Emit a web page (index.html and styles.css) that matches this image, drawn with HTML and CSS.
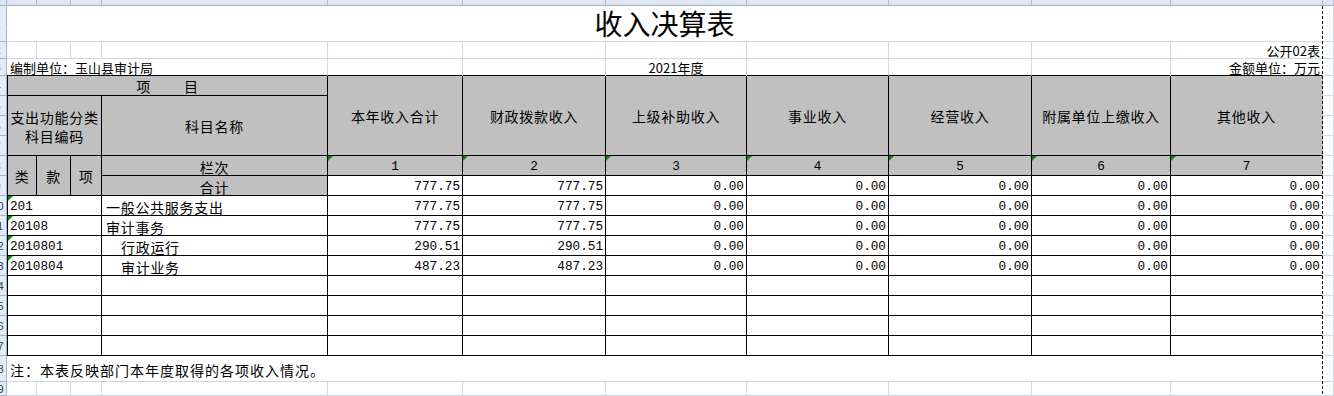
FILE: index.html
```html
<!DOCTYPE html>
<html lang="zh-CN">
<head>
<meta charset="utf-8">
<title>收入决算表</title>
<link rel="stylesheet" href="styles.css">
</head>
<body>
<div class="sheet">
  <!-- column headers -->
  <div class="corner"></div>
  <div class="ch"><span>A</span></div>
  <div class="ch"><span>B</span></div>
  <div class="ch"><span>C</span></div>
  <div class="ch"><span>D</span></div>
  <div class="ch"><span>E</span></div>
  <div class="ch"><span>F</span></div>
  <div class="ch"><span>G</span></div>
  <div class="ch"><span>H</span></div>
  <div class="ch"><span>I</span></div>
  <div class="ch"><span>J</span></div>
  <div class="ch"><span>K</span></div>
  <div class="ch"><span>L</span></div>

  <!-- row 1 -->
  <div class="rn"><span>1</span></div>
  <div class="cell g s11 kr title">收入决算表</div>
  <div class="cell g"></div>

  <!-- row 2 -->
  <div class="rn"><span>2</span></div>
  <div class="cell g"></div>
  <div class="cell g"></div>
  <div class="cell g"></div>
  <div class="cell g"></div>
  <div class="cell g"></div>
  <div class="cell g"></div>
  <div class="cell g"></div>
  <div class="cell g"></div>
  <div class="cell g"></div>
  <div class="cell g"></div>
  <div class="cell g kr right sm">公开02表</div>
  <div class="cell g"></div>

  <!-- row 3 -->
  <div class="rn"><span>3</span></div>
  <div class="cell g bb s4 sm lead">编制单位：玉山县审计局</div>
  <div class="cell g bb"></div>
  <div class="cell g bb"></div>
  <div class="cell g bb ctr sm">2021年度</div>
  <div class="cell g bb"></div>
  <div class="cell g bb"></div>
  <div class="cell g bb"></div>
  <div class="cell g bb kr right sm">金额单位：万元</div>
  <div class="cell g"></div>

  <!-- row 4 -->
  <div class="rn"><span>4</span></div>
  <div class="cell t hd ea s4 ctr">项<i class="gap"></i>目</div>
  <div class="cell t hd r4 ctr">本年收入合计</div>
  <div class="cell t hd r4 ctr">财政拨款收入</div>
  <div class="cell t hd r4 ctr">上级补助收入</div>
  <div class="cell t hd r4 ctr">事业收入</div>
  <div class="cell t hd r4 ctr">经营收入</div>
  <div class="cell t hd r4 ctr">附属单位上缴收入</div>
  <div class="cell t hd r4 ctr kr">其他收入</div>
  <div class="cell g"></div>

  <!-- row 5 -->
  <div class="rn"><span>5</span></div>
  <div class="cell t hd ea s3 r3 ctr wrap">支出功能分类<br>科目编码</div>
  <div class="cell t hd r3 ctr">科目名称</div>
  <div class="cell g"></div>

  <!-- row 6 -->
  <div class="rn"><span>6</span></div>
  <div class="cell g"></div>

  <!-- row 7 -->
  <div class="rn"><span>7</span></div>
  <div class="cell g"></div>

  <!-- row 8 -->
  <div class="rn"><span>8</span></div>
  <div class="cell t hd ea r2 ctr">类</div>
  <div class="cell t hd r2 ctr">款</div>
  <div class="cell t hd r2 ctr">项</div>
  <div class="cell t hd ctr low">栏次</div>
  <div class="cell t hd ctr mono low tri">1</div>
  <div class="cell t hd ctr mono low tri">2</div>
  <div class="cell t hd ctr mono low tri">3</div>
  <div class="cell t hd ctr mono low tri">4</div>
  <div class="cell t hd ctr mono low tri">5</div>
  <div class="cell t hd ctr mono low tri">6</div>
  <div class="cell t hd ctr mono low tri kr">7</div>
  <div class="cell g"></div>

  <!-- row 9 -->
  <div class="rn"><span>9</span></div>
  <div class="cell t hd ctr low">合计</div>
  <div class="cell t num">777.75</div>
  <div class="cell t num">777.75</div>
  <div class="cell t num">0.00</div>
  <div class="cell t num">0.00</div>
  <div class="cell t num">0.00</div>
  <div class="cell t num">0.00</div>
  <div class="cell t num kr">0.00</div>
  <div class="cell g"></div>

  <!-- row 10 -->
  <div class="rn"><span>10</span></div>
  <div class="cell t ea s3 code tri">201</div>
  <div class="cell t name">一般公共服务支出</div>
  <div class="cell t num">777.75</div>
  <div class="cell t num">777.75</div>
  <div class="cell t num">0.00</div>
  <div class="cell t num">0.00</div>
  <div class="cell t num">0.00</div>
  <div class="cell t num">0.00</div>
  <div class="cell t num kr">0.00</div>
  <div class="cell g"></div>

  <!-- row 11 -->
  <div class="rn"><span>11</span></div>
  <div class="cell t ea s3 code tri">20108</div>
  <div class="cell t name">审计事务</div>
  <div class="cell t num">777.75</div>
  <div class="cell t num">777.75</div>
  <div class="cell t num">0.00</div>
  <div class="cell t num">0.00</div>
  <div class="cell t num">0.00</div>
  <div class="cell t num">0.00</div>
  <div class="cell t num kr">0.00</div>
  <div class="cell g"></div>

  <!-- row 12 -->
  <div class="rn"><span>12</span></div>
  <div class="cell t ea s3 code tri">2010801</div>
  <div class="cell t name indent">行政运行</div>
  <div class="cell t num">290.51</div>
  <div class="cell t num">290.51</div>
  <div class="cell t num">0.00</div>
  <div class="cell t num">0.00</div>
  <div class="cell t num">0.00</div>
  <div class="cell t num">0.00</div>
  <div class="cell t num kr">0.00</div>
  <div class="cell g"></div>

  <!-- row 13 -->
  <div class="rn"><span>13</span></div>
  <div class="cell t ea s3 code tri">2010804</div>
  <div class="cell t name indent">审计业务</div>
  <div class="cell t num">487.23</div>
  <div class="cell t num">487.23</div>
  <div class="cell t num">0.00</div>
  <div class="cell t num">0.00</div>
  <div class="cell t num">0.00</div>
  <div class="cell t num">0.00</div>
  <div class="cell t num kr">0.00</div>
  <div class="cell g"></div>

  <!-- rows 14-17 (empty) -->
  <div class="rn"><span>14</span></div>
  <div class="cell t ea s3"></div>
  <div class="cell t"></div>
  <div class="cell t"></div><div class="cell t"></div><div class="cell t"></div><div class="cell t"></div><div class="cell t"></div><div class="cell t"></div><div class="cell t kr"></div>
  <div class="cell g"></div>

  <div class="rn"><span>15</span></div>
  <div class="cell t ea s3"></div>
  <div class="cell t"></div>
  <div class="cell t"></div><div class="cell t"></div><div class="cell t"></div><div class="cell t"></div><div class="cell t"></div><div class="cell t"></div><div class="cell t kr"></div>
  <div class="cell g"></div>

  <div class="rn"><span>16</span></div>
  <div class="cell t ea s3"></div>
  <div class="cell t"></div>
  <div class="cell t"></div><div class="cell t"></div><div class="cell t"></div><div class="cell t"></div><div class="cell t"></div><div class="cell t"></div><div class="cell t kr"></div>
  <div class="cell g"></div>

  <div class="rn"><span>17</span></div>
  <div class="cell t ea s3"></div>
  <div class="cell t"></div>
  <div class="cell t"></div><div class="cell t"></div><div class="cell t"></div><div class="cell t"></div><div class="cell t"></div><div class="cell t"></div><div class="cell t kr"></div>
  <div class="cell g"></div>

  <!-- row 18 note -->
  <div class="rn"><span>18</span></div>
  <div class="cell g s11 kr note">注：本表反映部门本年度取得的各项收入情况。</div>
  <div class="cell g"></div>

  <!-- row 19 -->
  <div class="rn"><span>19</span></div>
  <div class="cell g"></div>
  <div class="cell g"></div>
  <div class="cell g"></div>
  <div class="cell g"></div>
  <div class="cell g"></div>
  <div class="cell g"></div>
  <div class="cell g"></div>
  <div class="cell g"></div>
  <div class="cell g"></div>
  <div class="cell g"></div>
  <div class="cell g kr"></div>
  <div class="cell g"></div>

  <div class="pagebreak"></div>
</div>
</body>
</html>
```

FILE: styles.css
```css
html, body {
  margin: 0;
  padding: 0;
  background: #ffffff;
}

body {
  width: 1334px;
  height: 396px;
  overflow: hidden;
  font-family: "Noto Sans CJK SC", "Noto Sans", sans-serif;
  color: #000;
}

.sheet {
  position: relative;
  display: grid;
  width: 1334px;
  height: 396px;
  grid-template-columns: 7px 30px 34px 31px 226px 135px 143px 141px 142px 143px 139px 152px 1fr;
  grid-template-rows: 6px 36px 17px 17px repeat(14, 20px) 26px 1fr;
}

/* sheet chrome */
.corner {
  box-sizing: border-box;
  background: #dfe6f0;
  border-right: 1px solid #9eb6ce;
  border-bottom: 1px solid #9eb6ce;
}

.ch {
  box-sizing: border-box;
  display: flex;
  justify-content: center;
  overflow: hidden;
  background: linear-gradient(#e3eaf4, #d7e0ec);
  border-right: 1px solid #a9bdd5;
  border-bottom: 1px solid #9eb6ce;
}

.ch span {
  display: block;
  flex: none;
  margin-top: -12px;
  font-family: "Liberation Sans", sans-serif;
  font-size: 12px;
  line-height: 16px;
  color: #27415f;
}

.rn {
  box-sizing: border-box;
  display: flex;
  align-items: center;
  overflow: hidden;
  background: #e4ecf7;
  border-right: 1px solid #9eb6ce;
  border-bottom: 1px solid #9eb6ce;
}

.rn span {
  display: block;
  flex: none;
  width: 19px;
  margin-left: -12px;
  text-align: center;
  font-family: "Liberation Sans", sans-serif;
  font-size: 11px;
  color: #27415f;
}

/* cells */
.cell {
  box-sizing: border-box;
  position: relative;
  display: flex;
  align-items: center;
  min-width: 0;
  overflow: hidden;
  font-size: 14px;
  letter-spacing: 0.7px;
  line-height: 16px;
  white-space: nowrap;
}

.g {
  border-right: 1px solid #d0d7e5;
  border-bottom: 1px solid #d0d7e5;
}

.t {
  border-right: 1px solid #000;
  border-bottom: 1px solid #000;
}

.ea {
  border-left: 1px solid #000;
}

.bb {
  border-bottom-color: #000;
}

.kr {
  border-right-color: transparent;
}

.hd {
  background: #c0c0c0;
}

/* spans */
.s3 { grid-column: span 3; }
.s4 { grid-column: span 4; }
.s11 { grid-column: span 11; }
.r2 { grid-row: span 2; }
.r3 { grid-row: span 3; }
.r4 { grid-row: span 4; }

/* text */
.ctr {
  justify-content: center;
  text-align: center;
}

.right {
  justify-content: flex-end;
  padding-right: 2px;
}

.low {
  padding-top: 2px;
}

.wrap {
  white-space: normal;
  line-height: 19px;
  padding-top: 2px;
}

.gap {
  display: inline-block;
  width: 33px;
}

.title {
  justify-content: center;
  align-items: flex-end;
  font-size: 28px;
  letter-spacing: 0;
  line-height: 34px;
  padding-bottom: 1px;
}

.sm {
  font-size: 13px;
  letter-spacing: 0;
  padding-top: 1px;
}

.lead {
  padding-left: 3px;
}

.mono {
  font-family: "Liberation Mono", monospace;
  font-size: 12.7px;
  letter-spacing: 0;
}

.num {
  justify-content: flex-end;
  padding-right: 2px;
  padding-top: 2px;
  font-family: "Liberation Mono", monospace;
  font-size: 12.7px;
  letter-spacing: 0;
}

.code {
  padding-left: 2px;
  padding-top: 2px;
  font-family: "Liberation Mono", monospace;
  font-size: 12.7px;
  letter-spacing: 0;
}

.name {
  padding-left: 4px;
  padding-top: 2px;
}

.name.indent {
  padding-left: 19px;
}

.note {
  padding-left: 3px;
  padding-top: 2px;
  letter-spacing: 1px;
}

/* green "number stored as text" marker */
.tri::before {
  content: "";
  position: absolute;
  top: 0;
  left: 0;
  border-top: 5px solid #0c8a0c;
  border-right: 5px solid transparent;
}

/* page break indicator */
.pagebreak {
  position: absolute;
  left: 1322px;
  top: 6px;
  bottom: 0;
  width: 1px;
  background: repeating-linear-gradient(to bottom, #000 0 3px, transparent 3px 5px);
}
```
